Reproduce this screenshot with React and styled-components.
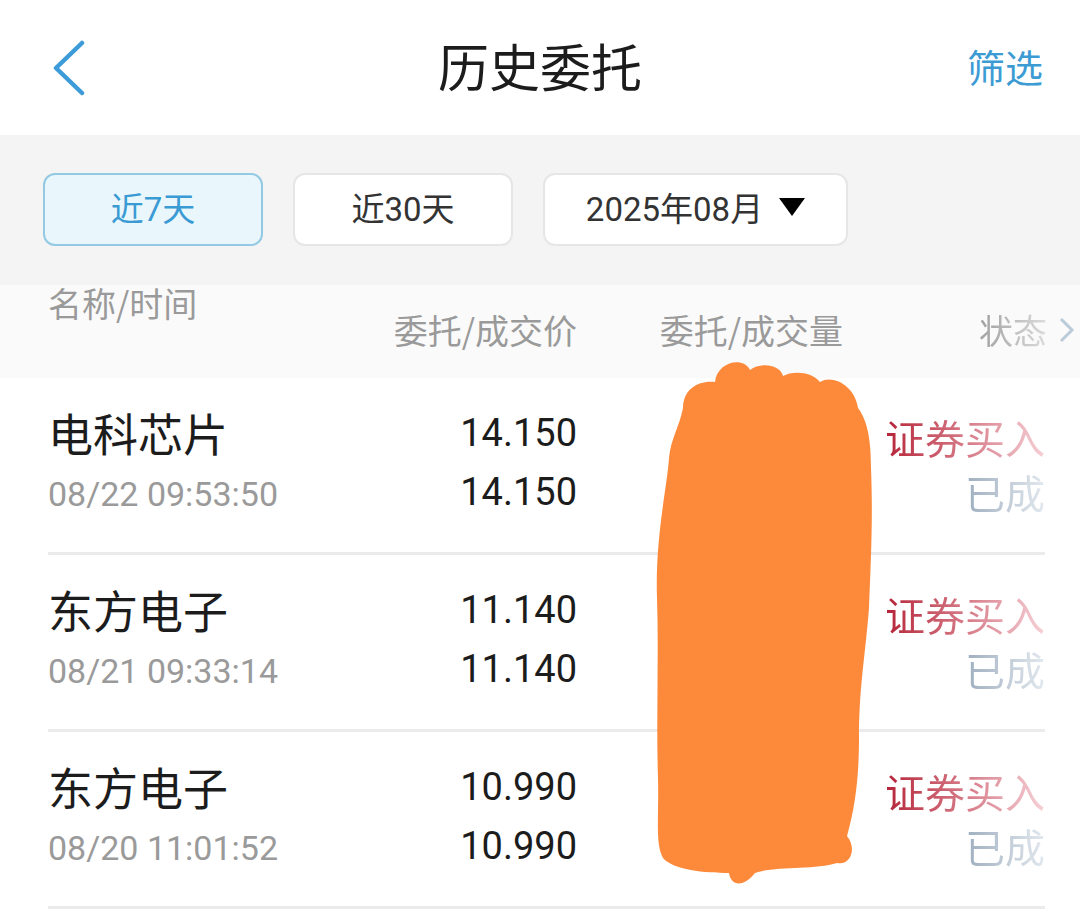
import styled, { createGlobalStyle } from 'styled-components';

const GlobalStyle = createGlobalStyle`
  body {
    margin: 0;
    background: #fff;
    font-family: Roboto, "Noto Sans CJK SC", sans-serif;
  }
`;

const cjk = `"Noto Sans CJK SC", sans-serif`;
const num = `Roboto, "Noto Sans CJK SC", sans-serif`;

const Page = styled.div`
  position: relative;
  width: 1080px;
  height: 915px;
  overflow: hidden;
  background: #fff;
`;

const TopBar = styled.div`
  height: 135px;
  display: grid;
  grid-template-columns: 1fr auto 1fr;
  align-items: center;
  padding: 0 37px;
`;

const Back = styled.div`
  display: flex;
  align-items: center;
  margin-left: 15px;
`;

const Title = styled.div`
  font-family: ${cjk};
  font-size: 51px;
  color: #1c1c1c;
  padding-bottom: 6px;
`;

const Filter = styled.div`
  justify-self: end;
  font-family: ${cjk};
  font-size: 38px;
  color: #3d9bd4;
  padding-bottom: 4px;
`;

const Band = styled.div`
  height: 150px;
  box-sizing: border-box;
  background: #f4f4f4;
  display: flex;
  gap: 30px;
  padding: 38px 43px 0;
`;

const RangeButton = styled.div`
  box-sizing: border-box;
  width: ${(p) => p.$w}px;
  height: 73px;
  padding-bottom: 6px;
  border-radius: 12px;
  border: 2px solid ${(p) => (p.$active ? '#93c9e2' : '#e6e6e6')};
  background: ${(p) => (p.$active ? '#e9f6fc' : '#fff')};
  color: ${(p) => (p.$active ? '#3a9ad3' : '#333')};
  font-family: ${num};
  font-size: 33px;
  display: flex;
  align-items: center;
  justify-content: center;
  gap: 16px;
`;

const cols = `grid-template-columns: 1fr 200px 266px 202px;`;

const ColumnHead = styled.div`
  height: 93px;
  box-sizing: border-box;
  background: #fafafa;
  display: grid;
  ${cols}
  padding: 0 35px 0 48px;
  font-family: ${cjk};
  font-size: 34px;
  color: #9a9a9a;
`;

const HeadCell = styled.div`
  align-self: ${(p) => (p.$top ? 'start' : 'end')};
  justify-self: ${(p) => (p.$top ? 'start' : 'end')};
  line-height: 36px;
  margin-bottom: ${(p) => (p.$top ? '0' : '30px')};
`;

const StatusHead = styled(HeadCell)`
  display: flex;
  align-items: center;
  gap: 12px;
  margin-right: -30px;
`;

const FadeText = styled.span`
  background: linear-gradient(90deg, #a0a0a0 0%, #dcdcdc 100%);
  -webkit-background-clip: text;
  background-clip: text;
  color: transparent;
`;

const Row = styled.div`
  height: 174px;
  display: grid;
  ${cols}
  align-items: center;
  border-bottom: 3px solid #ebebeb;
`;

const List = styled.div`
  padding: 0 35px 0 48px;
`;

const NameCell = styled.div`
  display: flex;
  flex-direction: column;
`;

const Name = styled.div`
  font-family: ${cjk};
  font-size: 45px;
  line-height: 58px;
  color: #1c1c1c;
`;

const Time = styled.div`
  font-family: ${num};
  font-size: 34px;
  line-height: 64px;
  color: #9a9a9a;
`;

const PriceCell = styled.div`
  text-align: right;
  font-family: ${num};
  font-size: 38px;
  line-height: 59px;
  color: #1c1c1c;
  padding-bottom: 4px;
`;

const StatusCell = styled.div`
  grid-column: 4;
  display: flex;
  flex-direction: column;
  font-family: ${cjk};
  font-size: 40px;
  line-height: 55px;
  text-align: right;
`;

const StatusLine = styled.div`
  background: ${(p) =>
    p.$kind === 'buy'
      ? 'linear-gradient(90deg, #b52236 20%, #f6d0d6 100%)'
      : 'linear-gradient(90deg, #8498ad 45%, #e2e8ee 100%)'};
  -webkit-background-clip: text;
  background-clip: text;
  color: transparent;
`;

const Scribble = styled.svg`
  position: absolute;
  left: 655px;
  top: 358px;
  width: 220px;
  height: 530px;
  overflow: visible;
`;

const orders = [
  { name: '电科芯片', time: '08/22 09:53:50', price: '14.150' },
  { name: '东方电子', time: '08/21 09:33:14', price: '11.140' },
  { name: '东方电子', time: '08/20 11:01:52', price: '10.990' },
];

const App = () => {
  return (
    <Page>
      <GlobalStyle />
      <TopBar>
        <Back>
          <svg width="34" height="56" viewBox="0 0 34 56">
            <polyline
              points="30,3 4,28 30,53"
              fill="none"
              stroke="#3d9bd9"
              strokeWidth="4.5"
              strokeLinecap="round"
              strokeLinejoin="round"
            />
          </svg>
        </Back>
        <Title>历史委托</Title>
        <Filter>筛选</Filter>
      </TopBar>

      <Band>
        <RangeButton $active $w={220}>近7天</RangeButton>
        <RangeButton $w={220}>近30天</RangeButton>
        <RangeButton $w={305}>
          2025年08月
          <svg width="26" height="20" viewBox="0 0 26 20">
            <polygon points="0,1 26,1 13,19" fill="#000" />
          </svg>
        </RangeButton>
      </Band>

      <ColumnHead>
        <HeadCell $top>名称/时间</HeadCell>
        <HeadCell>委托/成交价</HeadCell>
        <HeadCell>委托/成交量</HeadCell>
        <StatusHead>
          <FadeText>状态</FadeText>
          <svg width="16" height="26" viewBox="0 0 16 26">
            <polyline
              points="2,2 13,13 2,24"
              fill="none"
              stroke="#bccbd8"
              strokeWidth="3"
            />
          </svg>
        </StatusHead>
      </ColumnHead>

      <List>
        {orders.map((o, i) => (
          <Row key={i}>
            <NameCell>
              <Name>{o.name}</Name>
              <Time>{o.time}</Time>
            </NameCell>
            <PriceCell>
              <div>{o.price}</div>
              <div>{o.price}</div>
            </PriceCell>
            <StatusCell>
              <StatusLine $kind="buy">证券买入</StatusLine>
              <StatusLine>已成</StatusLine>
            </StatusCell>
          </Row>
        ))}
      </List>

      <Scribble viewBox="0 0 220 530">
        <path
          fill="#fd8a3b"
          d="M 28 50 C 28 30, 45 22, 60 24 C 62 4, 88 -2, 95 12 C 105 4, 125 6, 128 18 C 138 12, 158 14, 165 24 C 178 16, 200 28, 203 50 C 212 62, 216 80, 216 110 C 218 160, 216 200, 214 250 C 210 300, 204 330, 204 380 C 204 420, 200 450, 192 478 C 202 490, 196 508, 182 505 C 160 512, 120 508, 100 515 C 88 530, 76 528, 74 515 C 50 515, 18 512, 8 500 C 0 485, 4 460, 3 420 C 1 360, 4 300, 2 240 C 0 180, 12 130, 14 100 C 16 80, 24 70, 28 50 Z"
        />
      </Scribble>
    </Page>
  );
};

export default App;
